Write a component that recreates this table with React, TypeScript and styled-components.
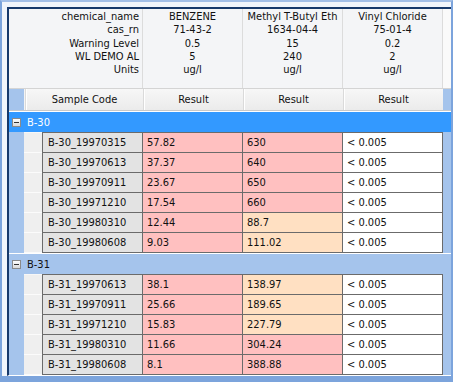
import styled, { createGlobalStyle } from 'styled-components';

const GlobalStyle = createGlobalStyle`
  html, body {
    margin: 0;
    padding: 0;
    background: #fff;
  }
  body {
    font-family: 'DejaVu Sans Condensed', 'Liberation Sans', Arial, sans-serif;
    font-size: 11px;
    color: #111;
  }
`;

type Tone = 'code' | 'pink' | 'peach' | 'white';

const tones: Record<Tone, string> = {
  code: '#e3e3e3',
  pink: '#ffc0c0',
  peach: '#ffe0c2',
  white: '#ffffff'
};

const chemicals = [
  { name: 'BENZENE', cas: '71-43-2', warning: '0.5', demo: '5', units: 'ug/l' },
  { name: 'Methyl T-Butyl Eth', cas: '1634-04-4', warning: '15', demo: '240', units: 'ug/l' },
  { name: 'Vinyl Chloride', cas: '75-01-4', warning: '0.2', demo: '2', units: 'ug/l' }
];

type Sample = { code: string; r1: string; r2: string; r2Tone: Tone };

const groups: { name: string; active: boolean; rows: Sample[] }[] = [
  {
    name: 'B-30',
    active: true,
    rows: [
      { code: 'B-30_19970315', r1: '57.82', r2: '630', r2Tone: 'pink' },
      { code: 'B-30_19970613', r1: '37.37', r2: '640', r2Tone: 'pink' },
      { code: 'B-30_19970911', r1: '23.67', r2: '650', r2Tone: 'pink' },
      { code: 'B-30_19971210', r1: '17.54', r2: '660', r2Tone: 'pink' },
      { code: 'B-30_19980310', r1: '12.44', r2: '88.7', r2Tone: 'peach' },
      { code: 'B-30_19980608', r1: '9.03', r2: '111.02', r2Tone: 'peach' }
    ]
  },
  {
    name: 'B-31',
    active: false,
    rows: [
      { code: 'B-31_19970613', r1: '38.1', r2: '138.97', r2Tone: 'peach' },
      { code: 'B-31_19970911', r1: '25.66', r2: '189.65', r2Tone: 'peach' },
      { code: 'B-31_19971210', r1: '15.83', r2: '227.79', r2Tone: 'peach' },
      { code: 'B-31_19980310', r1: '11.66', r2: '304.24', r2Tone: 'pink' },
      { code: 'B-31_19980608', r1: '8.1', r2: '388.88', r2Tone: 'pink' }
    ]
  }
];

// Window frame around the grid
const Frame = styled.div`
  box-sizing: border-box;
  width: 453px;
  height: 382px;
  padding: 5px 0 0 5px;
  background: #f1f5fb;
  border-style: solid;
  border-color: #7ca4dc;
  border-width: 2px 2px 6px 2px;
  border-top-color: #a3bfe7;
  overflow: hidden;
`;

const Grid = styled.div`
  box-sizing: border-box;
  height: 100%;
  border-left: 2px solid #17396b;
  border-top: 2px solid #17396b;
  border-bottom: 1px solid #fff;
  background: #a5c4ec;
  display: flex;
  flex-direction: column;
  overflow: hidden;
`;

// Chemical info block
const InfoBlock = styled.div`
  display: flex;
  flex: none;
  height: 80px;
  box-sizing: border-box;
  border-bottom: 1px solid #d4d4d4;
  background: #f4f5f7;
  line-height: 13.3px;
`;

const InfoLabels = styled.div`
  flex: none;
  width: 133px;
  box-sizing: border-box;
  padding: 1px 3px 0 0;
  text-align: right;
`;

const InfoValues = styled.div`
  flex: none;
  width: 100px;
  box-sizing: border-box;
  padding-top: 1px;
  text-align: center;
  white-space: nowrap;
  border-left: 1px solid #dcdcdc;
`;

const InfoFiller = styled.div`
  flex: 1;
  border-left: 1px solid #dcdcdc;
  background: #fafafa;
`;

// Column header row
const HeaderRow = styled.div`
  display: flex;
  flex: none;
  height: 22px;
  box-sizing: border-box;
  border-bottom: 1px solid #c9c9c9;
`;

const HeaderIndent = styled.div`
  flex: none;
  width: 15px;
  background: #a5c4ec;
  border-right: 1px solid #f4f4f4;
`;

const HeaderCell = styled.div<{ $width: number }>`
  flex: none;
  width: ${(p) => p.$width}px;
  box-sizing: border-box;
  display: flex;
  align-items: center;
  justify-content: center;
  background: linear-gradient(#f7f7f7, #ebebeb);
  border-left: 1px solid #dadada;
  box-shadow: inset 1px 0 0 #fff;
  &:first-of-type {
    border-left: none;
  }
`;

// Group header with expander
const GroupRow = styled.div<{ $active: boolean }>`
  display: flex;
  flex: none;
  align-items: center;
  gap: 6px;
  height: 21px;
  box-sizing: border-box;
  padding-left: 3px;
  border-top: 1px solid #fff;
  background: ${(p) => (p.$active ? '#3399ff' : '#a5c4ec')};
  color: ${(p) => (p.$active ? '#fff' : '#111')};
`;

const Toggle = styled.span`
  position: relative;
  width: 9px;
  height: 9px;
  box-sizing: border-box;
  border: 1px solid #8a8a8a;
  background: linear-gradient(#fff, #d9d9d9);

  &::after {
    content: '';
    position: absolute;
    left: 1px;
    right: 1px;
    top: 3px;
    height: 1px;
    background: #333;
  }
`;

// Data rows
const DataRow = styled.div<{ $first: boolean }>`
  display: flex;
  flex: none;
  height: ${(p) => (p.$first ? 21 : 20)}px;
`;

const RowIndent = styled.div`
  flex: none;
  width: 15px;
`;

const RowHead = styled.div<{ $first: boolean }>`
  flex: none;
  width: 18px;
  box-sizing: border-box;
  background: #efefef;
  border-bottom: 1px solid #fbfbfb;
  border-top: ${(p) => (p.$first ? '1px solid #f7f7f7' : 'none')};
`;

const Cell = styled.div<{ $tone: Tone; $first: boolean; $last?: boolean }>`
  flex: none;
  width: ${(p) => (p.$last ? 101 : 100)}px;
  box-sizing: border-box;
  padding-left: 4px;
  line-height: 19px;
  white-space: nowrap;
  background: ${(p) => tones[p.$tone]};
  border-left: 1px solid #6b6b6b;
  border-bottom: 1px solid #6b6b6b;
  border-top: ${(p) => (p.$first ? '1px solid #6b6b6b' : 'none')};
  border-right: ${(p) => (p.$last ? '1px solid #6b6b6b' : 'none')};
`;

const CodeCell = styled(Cell)`
  padding-left: 5px;
`;

export default function App() {
  return (
    <>
      <GlobalStyle />
      <Frame>
        <Grid>
          <InfoBlock>
            <InfoLabels>
              <div>chemical_name</div>
              <div>cas_rn</div>
              <div>Warning Level</div>
              <div>WL DEMO AL</div>
              <div>Units</div>
            </InfoLabels>
            {chemicals.map((c) => (
              <InfoValues key={c.name}>
                <div>{c.name}</div>
                <div>{c.cas}</div>
                <div>{c.warning}</div>
                <div>{c.demo}</div>
                <div>{c.units}</div>
              </InfoValues>
            ))}
            <InfoFiller />
          </InfoBlock>

          <HeaderRow>
            <HeaderIndent />
            <HeaderCell $width={118}>Sample Code</HeaderCell>
            <HeaderCell $width={100}>Result</HeaderCell>
            <HeaderCell $width={100}>Result</HeaderCell>
            <HeaderCell $width={100}>Result</HeaderCell>
          </HeaderRow>

          {groups.map((g) => (
            <div key={g.name}>
              <GroupRow $active={g.active}>
                <Toggle />
                <span>{g.name}</span>
              </GroupRow>
              {g.rows.map((r, i) => (
                <DataRow key={r.code} $first={i === 0}>
                  <RowIndent />
                  <RowHead $first={i === 0} />
                  <CodeCell $tone="code" $first={i === 0}>{r.code}</CodeCell>
                  <Cell $tone="pink" $first={i === 0}>{r.r1}</Cell>
                  <Cell $tone={r.r2Tone} $first={i === 0}>{r.r2}</Cell>
                  <Cell $tone="white" $first={i === 0} $last>&lt; 0.005</Cell>
                </DataRow>
              ))}
            </div>
          ))}
        </Grid>
      </Frame>
    </>
  );
}
